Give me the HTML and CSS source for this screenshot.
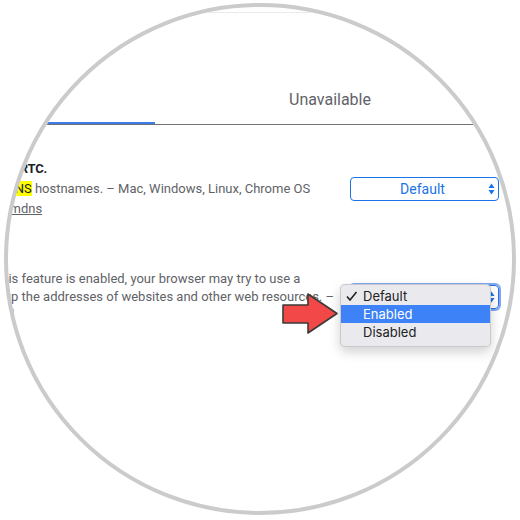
FILE: index.html
```html
<!DOCTYPE html>
<html lang="en">
<head>
    <meta charset="UTF-8">
    <meta name="viewport" content="width=device-width, initial-scale=1.0">
    <title>Experiments</title>
    <link rel="stylesheet" href="styles.css">
</head>
<body>

<div class="lens">
    <div class="toolbar"></div>

    <div class="page">
        <div class="tabs">
            <div class="tab active">Available</div>
            <div class="tab">Unavailable</div>
        </div>

        <div class="experiment first">
            <div class="experiment-text">
                <h3 class="experiment-name">Anonymize local IPs exposed by WebRTC.</h3>
                <p class="experiment-desc">Conceal local IP addresses with m<mark>DNS</mark> hostnames. &ndash; Mac, Windows, Linux, Chrome OS</p>
                <a class="permalink" href="#enable-webrtc-hide-local-ips-with-mdns">#enable-webrtc-hide-local-ips-with-mdns</a>
            </div>
            <div class="select">
                <span>Default</span>
                <svg class="arrows" width="7" height="12" viewBox="0 0 7 12"><path d="M3.5 0.5 L6.5 5 L0.5 5 Z M0.5 7 L6.5 7 L3.5 11.5 Z"/></svg>
            </div>
        </div>

        <div class="experiment second">
            <div class="experiment-text">
                <h3 class="experiment-name">Secure <mark>DNS</mark> lookups</h3>
                <p class="experiment-desc">Enables <mark>DNS</mark> over HTTPS. When this feature is enabled, your browser may try to use a<br>
                    secure HTTPS connection to look up the addresses of websites and other web resources. &ndash;<br>
                    Mac, Windows, Chrome OS, Android</p>
                <a class="permalink" href="#dns-over-https">#dns-over-https</a>
            </div>
            <div class="select focused">
                <span>Default</span>
                <svg class="arrows" width="7" height="12" viewBox="0 0 7 12"><path d="M3.5 0.5 L6.5 5 L0.5 5 Z M0.5 7 L6.5 7 L3.5 11.5 Z"/></svg>

                <ul class="menu">
                    <li class="checked">
                        <svg class="check" width="12" height="10" viewBox="0 0 12 10"><path d="M1 5.5 L4 9 L10.5 1"/></svg>
                        Default
                    </li>
                    <li class="highlight">Enabled</li>
                    <li>Disabled</li>
                </ul>
            </div>
        </div>
    </div>

    <svg class="pointer" width="62" height="48" viewBox="0 0 62 48">
        <path d="M3 15 L28 15 L28 4 L57 23.5 L28 43 L28 33 L3 33 Z"/>
    </svg>
</div>

</body>
</html>
```

FILE: styles.css
```css
body {
    margin: 0;
    background-color: #fff;
    font-family: 'Roboto', 'Liberation Sans', sans-serif;
}

.lens {
    position: relative;
    width: 512px;
    height: 512px;
    margin: 3px 0 0 4px;
    box-sizing: border-box;
    border: 4px solid #cbcbcb;
    border-radius: 50%;
    overflow: hidden;
    background-color: #fff;
}

.toolbar {
    height: 5px;
    border-bottom: 1px solid #ebebeb;
}

.page {
    width: 691px;
    margin-left: -200px;
}

.tabs {
    display: flex;
    width: 700px;
    margin: 77px 0 0 -3px;
    border-bottom: 1px solid #737373;
}

.tab {
    flex: 1;
    text-align: center;
    font-size: 16px;
    line-height: 20px;
    color: #5f6368;
    padding-bottom: 12px;
    border-bottom: 2px solid transparent;
}

.tab.active {
    border-bottom-color: #3b7ce8;
}

.experiment {
    display: flex;
    align-items: center;
    justify-content: space-between;
}

.experiment.first {
    margin-top: 35px;
}

.experiment.second {
    margin-top: 32px;
}

.experiment-text {
    flex: 1;
    font-size: 13px;
    line-height: 18px;
    color: #5f6368;
    white-space: nowrap;
}

.experiment-name {
    margin: 0 0 2px;
    font-size: 13px;
    font-weight: bold;
    letter-spacing: -0.15px;
    color: #202124;
}

.experiment-desc {
    margin: 0 0 2px;
}

mark {
    background-color: #ffff00;
    color: #202124;
}

.permalink {
    color: #5f6368;
    text-decoration: underline;
}

.select {
    position: relative;
    display: flex;
    align-items: center;
    justify-content: center;
    width: 149px;
    height: 24px;
    box-sizing: border-box;
    border: 1px solid #1a73e8;
    border-radius: 4px;
    color: #1a73e8;
    font-size: 14px;
}

.select span {
    margin-right: 4px;
}

.select .arrows {
    position: absolute;
    right: 3px;
    top: 5px;
    fill: #1a73e8;
}

.select.focused {
    border-color: #2f6fe0;
    box-shadow: 0 0 0 2px #7ea8f3;
}

.menu {
    position: absolute;
    left: -11px;
    top: -2px;
    width: 151px;
    margin: 0;
    padding: 2px 0 5px;
    list-style: none;
    box-sizing: border-box;
    background-color: #eaeaee;
    border: 1px solid rgba(0, 0, 0, 0.14);
    border-radius: 5px;
    box-shadow: 0 5px 12px rgba(0, 0, 0, 0.18);
    font-family: 'Inter', 'Roboto', sans-serif;
    font-size: 13px;
    color: #222;
}

.menu li {
    position: relative;
    height: 18px;
    line-height: 18px;
    padding-left: 22px;
}

.menu li.highlight {
    background-color: #3d82f7;
    color: #fff;
}

.menu .check {
    position: absolute;
    left: 5px;
    top: 4px;
    fill: none;
    stroke: #222;
    stroke-width: 1.6;
}

.pointer {
    position: absolute;
    left: 272px;
    top: 283px;
}

.pointer path {
    fill: #f34848;
    stroke: #3a3a3a;
    stroke-width: 1.6;
    stroke-linejoin: round;
}
```
